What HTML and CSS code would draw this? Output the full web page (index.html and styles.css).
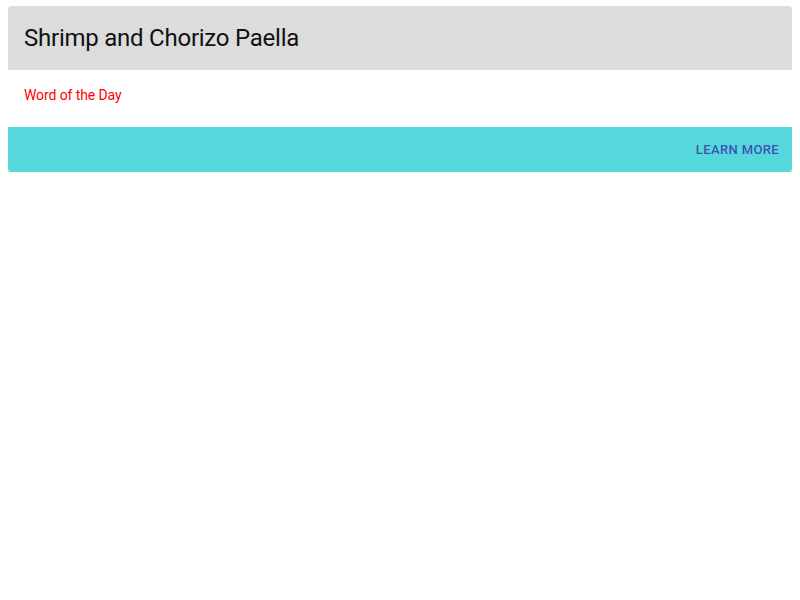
FILE: index.html
```html
<!DOCTYPE html>
<html>
<head>
<meta charset="utf-8">
<link rel="stylesheet" href="styles.css">
</head>
<body>
<div class="card">
  <div class="card-header">
    <span class="title">Shrimp and Chorizo Paella</span>
  </div>
  <div class="card-content">
    <p class="word">Word of the Day</p>
  </div>
  <div class="card-actions">
    <button class="btn">Learn More</button>
  </div>
</div>
</body>
</html>
```
FILE: styles.css
```css
body {
  margin: 6px 8px;
  font-family: Roboto, "Liberation Sans", sans-serif;
  background: #fff;
}
.card {
  border-radius: 4px;
  overflow: hidden;
  background: #fff;
  box-shadow: 0px 2px 1px -1px rgba(0,0,0,0.2), 0px 1px 1px 0px rgba(0,0,0,0.14), 0px 1px 3px 0px rgba(0,0,0,0.12);
}
.card-header {
  background: #dcdcdc;
  padding: 16px;
  display: flex;
  align-items: center;
}
.title {
  font-size: 24px;
  line-height: 32px;
  font-weight: 400;
  letter-spacing: -0.24px;
  color: #111;
}
.card-content {
  padding: 15px 16px 22px;
}
.word {
  margin: 0;
  font-size: 14px;
  line-height: 20px;
  color: #f00;
  letter-spacing: -0.1px;
}
.card-actions {
  background: #55d9dc;
  padding: 7px 8px;
  display: flex;
  justify-content: flex-end;
}
.btn {
  background: transparent;
  border: 0;
  font-family: inherit;
  font-weight: 500;
  font-size: 13px;
  line-height: 23px;
  letter-spacing: 0.02857em;
  text-transform: uppercase;
  padding: 4px 5px;
  color: #3f51b5;
  border-radius: 4px;
}
```
